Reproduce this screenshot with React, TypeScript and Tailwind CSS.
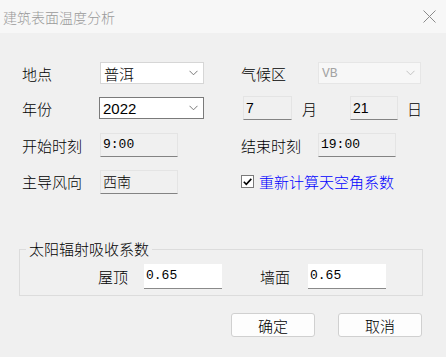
import React from 'react';

const cjk = "font-['Noto_Sans_CJK_SC','Noto_Sans',sans-serif] font-light";
const mono = "font-['Liberation_Mono','Noto_Sans_CJK_SC',monospace]";
const sans = "font-['Liberation_Sans','Noto_Sans_CJK_SC',sans-serif]";

const Chevron = ({color = '#6b6b6b'}: {color?: string}) => (
    <svg width="9" height="6" viewBox="0 0 9 6" className="shrink-0">
        <polyline points="0.5,0.8 4.5,4.8 8.5,0.8" fill="none" stroke={color} strokeWidth="0.9"/>
    </svg>
);

const Select = ({value, width, focused, disabled, font}: {
    value: string; width: string; focused?: boolean; disabled?: boolean; font: string;
}) => {
    const box = disabled
        ? 'bg-[#f7f7f7] border-[#e6e6e6] text-[#a3a3a3]'
        : focused
            ? 'bg-white border-[#7a7a7a] text-black'
            : 'bg-white border-[#d6d6d6] text-black';
    return (
        <div className={`${width} h-[22px] border flex items-center justify-between pl-[3px] pr-[5px] ${box}`}>
            <span className={`${font} leading-none`}>{value}</span>
            <Chevron color={disabled ? '#bdbdbd' : '#6b6b6b'}/>
        </div>
    );
};

const ReadBox = ({value, width, font}: { value: string; width: string; font: string }) => (
    <div className={`${width} h-[24px] bg-[#f0f0f0] border border-[#e4e4e4] border-b-[#838383] flex items-center pl-[2px] ${font} text-black`}>
        {value}
    </div>
);

const Label = ({children, width}: { children: React.ReactNode; width: string }) => (
    <div className={`${width} shrink-0 ${cjk} text-[15px] leading-none text-black`}>{children}</div>
);

export default function App() {
    return (
        <div className="w-[446px] h-[357px] bg-[#f0f0f0] overflow-hidden select-none">
            {/* title bar */}
            <div className="h-[33px] bg-[#f7f7f7] flex items-center justify-between pl-[3px] pr-[10px]">
                <span className={`${cjk} text-[14px] text-[#9a9a9a] leading-none`}>建筑表面温度分析</span>
                <svg width="13" height="13" viewBox="0 0 13 13">
                    <path d="M0.5 0.5 L12.5 12.5 M12.5 0.5 L0.5 12.5" stroke="#8a8a8a" strokeWidth="1"/>
                </svg>
            </div>

            {/* row 1 */}
            <div className="mt-[29px] h-[22px] flex items-center pl-[22px]">
                <Label width="w-[78px]">地点</Label>
                <Select value="普洱" width="w-[104px]" font={`${cjk} text-[15px]`}/>
                <div className="w-[37px]"/>
                <Label width="w-[77px]">气候区</Label>
                <Select value="VB" width="w-[103px]" disabled font={`${mono} text-[13px]`}/>
            </div>

            {/* row 2 */}
            <div className="mt-[12px] h-[24px] flex items-center pl-[22px]">
                <Label width="w-[77px]">年份</Label>
                <Select value="2022" width="w-[105px]" focused font={`${sans} text-[15px]`}/>
                <div className="w-[39px]"/>
                <ReadBox value="7" width="w-[49px]" font={`${sans} text-[14px]`}/>
                <div className="w-[10px]"/>
                <Label width="w-[48px]">月</Label>
                <ReadBox value="21" width="w-[48px]" font={`${sans} text-[14px]`}/>
                <div className="w-[9px]"/>
                <Label width="w-[16px]">日</Label>
            </div>

            {/* row 3 */}
            <div className="mt-[13px] h-[24px] flex items-center pl-[22px]">
                <Label width="w-[78px]">开始时刻</Label>
                <ReadBox value="9:00" width="w-[78px]" font={`${mono} text-[13px]`}/>
                <div className="w-[63px]"/>
                <Label width="w-[77px]">结束时刻</Label>
                <ReadBox value="19:00" width="w-[78px]" font={`${mono} text-[13px]`}/>
            </div>

            {/* row 4 */}
            <div className="mt-[12px] h-[25px] flex items-center pl-[22px]">
                <Label width="w-[78px]">主导风向</Label>
                <ReadBox value="西南" width="w-[78px]" font={`${cjk} text-[14px]`}/>
                <div className="w-[63px]"/>
                <div className="flex items-center gap-[5px]">
                    <div className="w-[13px] h-[13px] bg-white border border-[#7a7a7a] flex items-center justify-center">
                        <svg width="9" height="8" viewBox="0 0 9 8">
                            <polyline points="0.8,3.8 3.3,6.4 8.3,0.9" fill="none" stroke="#000" strokeWidth="1.6"/>
                        </svg>
                    </div>
                    <span className={`${cjk} text-[15px] leading-none text-[#0000ff]`}>重新计算天空角系数</span>
                </div>
            </div>

            {/* group box */}
            <fieldset className="mt-[47px] ml-[19px] w-[404px] border border-[#dcdcdc] px-0 pt-[7px] pb-[6px]">
                <legend className={`ml-[6px] px-[3px] ${cjk} text-[15px] leading-[16px] text-black`}>太阳辐射吸收系数</legend>
                <div className="h-[25px] flex items-center">
                    <div className={`w-[124px] text-right pr-[16px] ${cjk} text-[15px] leading-none`}>屋顶</div>
                    <div className={`w-[78px] h-[25px] bg-white border-b border-[#8a8a8a] flex items-center pl-[2px] ${mono} text-[13px]`}>0.65</div>
                    <div className={`w-[86px] text-right pr-[18px] ${cjk} text-[15px] leading-none`}>墙面</div>
                    <div className={`w-[78px] h-[25px] bg-white border-b border-[#8a8a8a] flex items-center pl-[2px] ${mono} text-[13px]`}>0.65</div>
                </div>
            </fieldset>

            {/* buttons */}
            <div className="mt-[17px] flex justify-end gap-[23px] pr-[24px]">
                <button className={`w-[84px] h-[24px] bg-[#fdfdfd] border border-[#d0d0d0] rounded-[3px] ${cjk} text-[15px] leading-none`}>确定</button>
                <button className={`w-[84px] h-[24px] bg-[#fdfdfd] border border-[#d0d0d0] rounded-[3px] ${cjk} text-[15px] leading-none`}>取消</button>
            </div>
        </div>
    );
}
